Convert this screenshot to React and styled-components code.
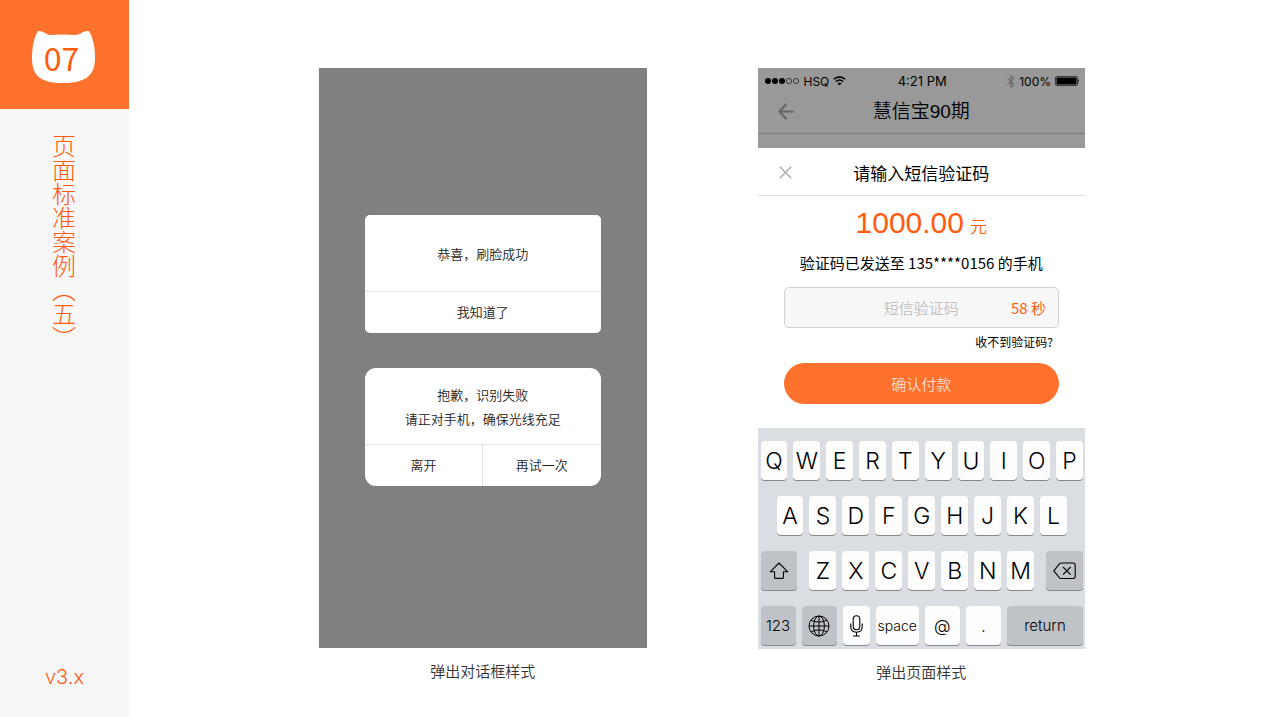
import React from "react";
import styled, { createGlobalStyle } from "styled-components";

const GlobalStyle = createGlobalStyle`
  * {
    box-sizing: border-box;
  }

  body {
    margin: 0;
    background: #fff;
    color: #000;
    font-family: "Noto Sans CJK SC", sans-serif;
  }

  button, input {
    font-family: inherit;
    margin: 0;
    padding: 0;
    border: 0;
    background: none;
    color: inherit;
  }

  button { cursor: pointer; }

  svg { display: block; }
`

const latin = `"Liberation Sans", Arial, "Noto Sans CJK SC", sans-serif`
const thin = `Inter, "Liberation Sans", "Noto Sans CJK SC", sans-serif`

const Page = styled.div`
  display: flex;
  min-height: 100vh;
`

const Sidebar = styled.aside`
  display: flex;
  flex-direction: column;
  align-items: center;
  flex: 0 0 129px;
  background: #f7f7f7;
  color: #ff5b0f;
`

const Badge = styled.div`
  display: grid;
  place-items: center;
  align-self: stretch;
  height: 109px;
  padding-top: 4px;
  padding-right: 2px;
  background: #ff722d;

  > * { grid-area: 1 / 1; }
`

const BadgeNumber = styled.span`
  padding-right: 4px;
  font-size: 32px;
  font-weight: 400;
  line-height: 32px;
`

const SideTitle = styled.h1`
  margin: 25px 2px 0 0;
  writing-mode: vertical-rl;
  font-size: 24px;
  font-weight: 300;
  line-height: 26px;
`

const Version = styled.p`
  margin: auto 0 28px;
  font-family: ${thin};
  font-size: 20px;
  font-weight: 300;
  line-height: 24px;
`

const Main = styled.main`
  flex: 1;
  display: grid;
  grid-template-columns: 1fr 1fr;
  align-items: start;
  gap: 111px;
  padding: 68px 195px 0 190px;
`

const Figure = styled.figure`
  margin: 0;
`

const Caption = styled.figcaption`
  margin-top: 11px;
  color: #333;
  font-size: 15px;
  font-weight: 350;
  line-height: 24px;
  text-align: center;
`

const DialogScreen = styled.div`
  display: flex;
  flex-direction: column;
  gap: 35px;
  padding: 147px 46px 162px;
  background: #808080;
`

const Dialog = styled.section`
  overflow: hidden;
  border-radius: ${props => props.radius};
  background: #fff;
  color: #222;
  font-size: 13px;
  font-weight: 350;
`

const DialogText = styled.p`
  display: flex;
  flex-direction: column;
  justify-content: center;
  min-height: 76px;
  margin: 0;
  padding-top: 1px;
  line-height: 24px;
  text-align: center;
`

const DialogActions = styled.div`
  display: flex;
  border-top: 1px solid #e2e2e2;
`

const DialogButton = styled.button`
  flex: 1;
  height: 41px;
  padding-bottom: 3px;
  font-size: 13px;
  font-weight: 350;

  & + & { border-left: 1px solid #e2e2e2; }
`

const DimmedHeader = styled.header`
  height: 80px;
  background: #999;
`

const StatusBar = styled.div`
  display: grid;
  grid-template-columns: 1fr auto 1fr;
  align-items: center;
  height: 26px;
  padding: 0 5px 0 7px;
  font-family: ${thin};
  font-size: 13px;
`

const StatusGroup = styled.div`
  display: flex;
  align-items: center;
  justify-content: ${props => props.end ? "flex-end" : "flex-start"};
  gap: 4px;
  font-size: 12px;
`

const NavBar = styled.div`
  display: grid;
  grid-template-columns: 56px 1fr 56px;
  align-items: center;
  height: 40px;
  padding-bottom: 4px;
  border-bottom: 1px solid #7d7d7d;
`

const NavTitle = styled.h2`
  margin: 0;
  font-family: ${latin};
  font-size: 19px;
  font-weight: 350;
  line-height: 26px;
  text-align: center;
`

const IconButton = styled.button`
  display: flex;
  justify-content: center;
  color: ${props => props.color};
`

const SheetHeader = styled.div`
  display: grid;
  grid-template-columns: 56px 1fr 56px;
  align-items: center;
  height: 48px;
  padding-top: 2px;
  border-bottom: 1px solid #ddd;
`

const SheetTitle = styled.h3`
  margin: 0;
  font-size: 17px;
  font-weight: 400;
  line-height: 24px;
  text-align: center;
`

const SheetBody = styled.form`
  display: flex;
  flex-direction: column;
  padding: 7px 26px 24px;
`

const Amount = styled.p`
  margin: 0;
  color: #ff5b0f;
  font-family: ${latin};
  font-size: 30px;
  line-height: 40px;
  text-align: center;
`

const Unit = styled.span`
  margin-left: 6px;
  font-family: "Noto Sans CJK SC", sans-serif;
  font-size: 17px;
  font-weight: 350;
  line-height: 20px;
`

const SentTo = styled.label`
  margin: 8px 0 12px;
  font-size: 15px;
  line-height: 24px;
  text-align: center;
`

const CodeField = styled.div`
  display: grid;
  grid-template-columns: 60px 1fr 60px;
  align-items: center;
  height: 41px;
  border: 1px solid #d2d2d2;
  border-radius: 5px;
  background: #f7f7f7;
`

const CodeInput = styled.input`
  grid-column: 2;
  min-width: 0;
  height: 39px;
  font-size: 15px;
  text-align: center;
  outline: none;

  &::placeholder {
    color: #bfbfbf;
    opacity: 1;
    font-weight: 350;
  }
`

const Countdown = styled.span`
  padding-right: 12px;
  color: #ff5b0f;
  font-size: 15px;
  text-align: right;
`

const HelpLink = styled.a`
  align-self: flex-end;
  margin: 4px 6px 11px 0;
  color: #000;
  font-size: 12px;
  line-height: 20px;
  text-decoration: none;
`

const PayButton = styled.button`
  height: 41px;
  border-radius: 21px;
  background: #ff722d;
  color: #ffdccb;
  font-size: 15px;
  font-weight: 350;
`

const Keyboard = styled.div`
  display: flex;
  flex-direction: column;
  gap: 16px;
  padding: 13px 2px 4px 3px;
  background: #dadde1;
`

const KeyRow = styled.div`
  display: flex;
  gap: 6px;
  padding: 0 ${props => props.inset || "0px"};
`

const Key = styled.button`
  display: flex;
  align-items: center;
  justify-content: center;
  flex: ${props => props.grow || 27} 1 0;
  min-width: 0;
  height: 39px;
  border-radius: 4px;
  background: ${props => props.dark ? "#bfc3c7" : "#fdfdfd"};
  box-shadow: 0 1px 0 #85888c;
  font-family: ${thin};
  font-size: ${props => props.size || "23px"};
  font-weight: 300;

  &.shift { margin-right: 6px; }
  &.delete { margin-left: 6px; }
`

const CatHead = () => (
  <svg width="65" height="54" viewBox="0 0 65 54" aria-hidden="true">
    <path
      d="M7 1.2C10 0 15 4.3 19 5Q32 4 45 5C49 4.3 54 0 58 1.2C62 7 64 17 64 28C64 46 54 53 32 53S1 46 1 28C1 17 3 7 7 1.2Z"
      fill="#fff"
    />
  </svg>
)

const SignalIcon = () => (
  <svg width="35" height="8" viewBox="0 0 35 8" aria-hidden="true">
    {[3, 10, 17].map(x => <circle key={x} cx={x} cy="4" r="3" />)}
    {[24, 31].map(x => <circle key={x} cx={x} cy="4" r="2.6" fill="none" stroke="#222" strokeWidth=".8" />)}
  </svg>
)

const WifiIcon = () => (
  <svg width="13" height="10" viewBox="0 0 13 10" fill="none" stroke="#000" strokeWidth="1.5" aria-hidden="true">
    <path d="M.8 3.3Q6.5-1.5 12.2 3.3M2.8 5.6Q6.5 2.5 10.2 5.6" />
    <path d="M4.4 7.2Q6.5 5.6 8.6 7.2L6.5 9.5Z" fill="#000" stroke="none" />
  </svg>
)

const BluetoothIcon = () => (
  <svg width="8" height="13" viewBox="0 0 8 13" fill="none" stroke="#555" strokeWidth=".9" aria-hidden="true">
    <path d="M.5 3.4L7.2 9.4L4 12.3V.7L7.2 3.6L.5 9.6" />
  </svg>
)

const BatteryIcon = () => (
  <svg width="25" height="10" viewBox="0 0 25 10" aria-hidden="true">
    <rect x=".5" y=".5" width="22" height="9" rx="1.5" fill="none" stroke="#222" strokeWidth=".8" />
    <rect x="1.5" y="1.5" width="20" height="7" rx=".7" />
    <path d="M23.4 3.3Q25 5 23.4 6.7Z" />
  </svg>
)

const BackIcon = () => (
  <svg width="16" height="17" viewBox="0 0 16 17" fill="none" stroke="currentColor" strokeWidth="2" aria-hidden="true">
    <path d="M8.6.8L1.4 8.5L8.6 16.2M1.6 8.5H15.6" />
  </svg>
)

const CloseIcon = () => (
  <svg width="13" height="13" viewBox="0 0 13 13" fill="none" stroke="currentColor" strokeWidth="1.4" aria-hidden="true">
    <path d="M.8.8L12.2 12.2M12.2.8L.8 12.2" />
  </svg>
)

const ShiftIcon = () => (
  <svg width="20" height="18" viewBox="0 0 20 18" fill="none" stroke="#000" strokeWidth="1.1" strokeLinejoin="round" aria-hidden="true">
    <path d="M10 1L18.8 9.8H14.4V15.4Q14.4 16.4 13.4 16.4H6.6Q5.6 16.4 5.6 15.4V9.8H1.2Z" />
  </svg>
)

const DeleteIcon = () => (
  <svg width="23" height="18" viewBox="0 0 23 18" fill="none" stroke="#000" strokeWidth="1.1" strokeLinejoin="round" aria-hidden="true">
    <path d="M8.2 1H20Q22.2 1 22.2 3.2V14.3Q22.2 16.5 20 16.5H8.2Q7.3 16.5 6.6 15.8L.8 8.8L6.6 1.7Q7.3 1 8.2 1Z" />
    <path d="M10 5L17.6 12.6M17.6 5L10 12.6" />
  </svg>
)

const GlobeIcon = () => (
  <svg width="22" height="22" viewBox="0 0 22 22" fill="none" stroke="#000" strokeWidth="1" aria-hidden="true">
    <circle cx="11" cy="11" r="10" />
    <ellipse cx="11" cy="11" rx="5.4" ry="10" />
    <path d="M11 1V21M1 11H21M3 5.2Q11 9 19 5.2M3 16.8Q11 13 19 16.8" />
  </svg>
)

const MicIcon = () => (
  <svg width="13" height="22" viewBox="0 0 13 22" fill="none" stroke="#000" strokeWidth="1.1" aria-hidden="true">
    <rect x="3.2" y=".8" width="6.6" height="14" rx="3.3" />
    <path d="M.8 8.5V11.8C.8 15.4 3 17.2 6.5 17.2S12.2 15.4 12.2 11.8V8.5M6.5 17.2V20.8M3 21H10" />
  </svg>
)

const letters = row => row.split("").map(letter => (
  <Key type="button" key={letter}>{letter}</Key>
))

const DialogFigure = () => (
  <Figure>
    <DialogScreen>
      <Dialog radius="5px">
        <DialogText>恭喜，刷脸成功</DialogText>
        <DialogActions>
          <DialogButton type="button">我知道了</DialogButton>
        </DialogActions>
      </Dialog>
      <Dialog radius="11px">
        <DialogText>
          <span>抱歉，识别失败</span>
          <span>请正对手机，确保光线充足</span>
        </DialogText>
        <DialogActions>
          <DialogButton type="button">离开</DialogButton>
          <DialogButton type="button">再试一次</DialogButton>
        </DialogActions>
      </Dialog>
    </DialogScreen>
    <Caption>弹出对话框样式</Caption>
  </Figure>
)

const PaymentFigure = () => (
  <Figure>
    <DimmedHeader>
      <StatusBar>
        <StatusGroup>
          <SignalIcon />
          <span>HSQ</span>
          <WifiIcon />
        </StatusGroup>
        <span>4:21 PM</span>
        <StatusGroup end={1}>
          <BluetoothIcon />
          <span>100%</span>
          <BatteryIcon />
        </StatusGroup>
      </StatusBar>
      <NavBar>
        <IconButton type="button" color="#666" aria-label="返回"><BackIcon /></IconButton>
        <NavTitle>慧信宝90期</NavTitle>
      </NavBar>
    </DimmedHeader>
    <SheetHeader>
      <IconButton type="button" color="#aaa" aria-label="关闭"><CloseIcon /></IconButton>
      <SheetTitle>请输入短信验证码</SheetTitle>
    </SheetHeader>
    <SheetBody onSubmit={e => e.preventDefault()}>
      <Amount>1000.00<Unit>元</Unit></Amount>
      <SentTo htmlFor="code">验证码已发送至 135****0156 的手机</SentTo>
      <CodeField>
        <CodeInput id="code" type="text" placeholder="短信验证码" />
        <Countdown>58 秒</Countdown>
      </CodeField>
      <HelpLink href="#help">收不到验证码?</HelpLink>
      <PayButton type="submit">确认付款</PayButton>
    </SheetBody>
    <Keyboard>
      <KeyRow>{letters("QWERTYUIOP")}</KeyRow>
      <KeyRow inset="16px">{letters("ASDFGHJKL")}</KeyRow>
      <KeyRow>
        <Key type="button" className="shift" grow={37} dark={1} aria-label="shift"><ShiftIcon /></Key>
        {letters("ZXCVBNM")}
        <Key type="button" className="delete" grow={37} dark={1} aria-label="delete"><DeleteIcon /></Key>
      </KeyRow>
      <KeyRow>
        <Key type="button" grow={35} dark={1} size="15px">123</Key>
        <Key type="button" grow={35} dark={1} aria-label="language"><GlobeIcon /></Key>
        <Key type="button" aria-label="dictate"><MicIcon /></Key>
        <Key type="button" grow={43} size="14px">space</Key>
        <Key type="button" grow={35} size="17px">@</Key>
        <Key type="button" grow={35} size="17px">.</Key>
        <Key type="button" grow={76} dark={1} size="15px">return</Key>
      </KeyRow>
    </Keyboard>
    <Caption>弹出页面样式</Caption>
  </Figure>
)

const App = () => (
  <Page>
    <GlobalStyle />
    <Sidebar>
      <Badge>
        <CatHead />
        <BadgeNumber>07</BadgeNumber>
      </Badge>
      <SideTitle>页面标准案例（五）</SideTitle>
      <Version>v3.x</Version>
    </Sidebar>
    <Main>
      <DialogFigure />
      <PaymentFigure />
    </Main>
  </Page>
)

export default App;
